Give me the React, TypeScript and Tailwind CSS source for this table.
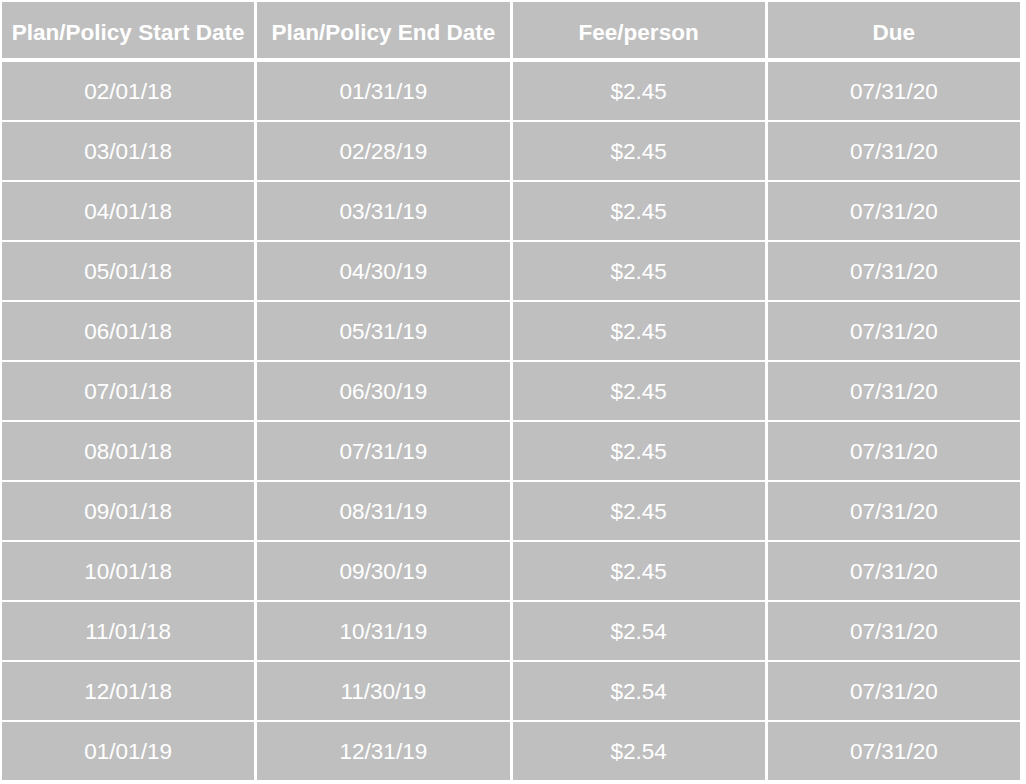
const rows: [string, string, string, string][] = [
  ["02/01/18", "01/31/19", "$2.45", "07/31/20"],
  ["03/01/18", "02/28/19", "$2.45", "07/31/20"],
  ["04/01/18", "03/31/19", "$2.45", "07/31/20"],
  ["05/01/18", "04/30/19", "$2.45", "07/31/20"],
  ["06/01/18", "05/31/19", "$2.45", "07/31/20"],
  ["07/01/18", "06/30/19", "$2.45", "07/31/20"],
  ["08/01/18", "07/31/19", "$2.45", "07/31/20"],
  ["09/01/18", "08/31/19", "$2.45", "07/31/20"],
  ["10/01/18", "09/30/19", "$2.45", "07/31/20"],
  ["11/01/18", "10/31/19", "$2.54", "07/31/20"],
  ["12/01/18", "11/30/19", "$2.54", "07/31/20"],
  ["01/01/19", "12/31/19", "$2.54", "07/31/20"],
];

const headers = ["Plan/Policy Start Date", "Plan/Policy End Date", "Fee/person", "Due"];

export default function App() {
  return (
    <div
      className="w-[1026px] h-[784px] bg-white pt-[2px] pl-[2px] text-white text-[22.5px]"
      style={{ fontFamily: '"Liberation Sans", Arial, sans-serif' }}
    >
      {/* header */}
      <div className="w-[1018px] grid grid-cols-4 gap-x-[3px] mb-[4px]">
        {headers.map((h) => (
          <div key={h} className="h-[56px] bg-[#bfbfbf] flex items-center justify-center font-bold pt-[5px] whitespace-nowrap">
            {h}
          </div>
        ))}
      </div>
      <div className="w-[1018px] flex flex-col gap-y-[2px]">
        {rows.map((r, i) => (
          <div key={i} className="grid grid-cols-4 gap-x-[3px]">
            {r.map((c, j) => (
              <div key={j} className="h-[58px] bg-[#bfbfbf] flex items-center justify-center pt-[2px]">
                {c}
              </div>
            ))}
          </div>
        ))}
      </div>
    </div>
  );
}
